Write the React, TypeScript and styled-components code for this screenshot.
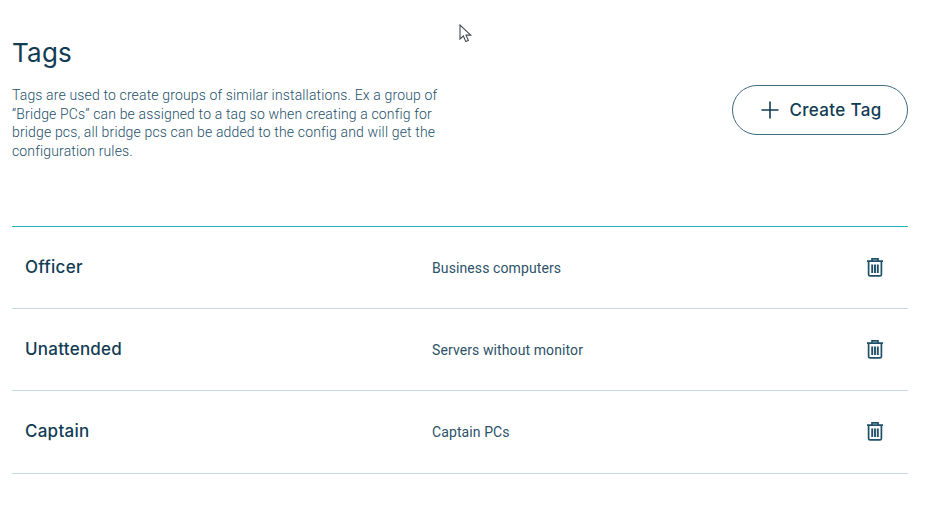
import React from 'react'

import styled, { createGlobalStyle } from 'styled-components'

const GlobalStyle = createGlobalStyle`
  html, body {
    margin: 0;
    padding: 0;
    background: #ffffff;
  }
`

const Page = styled.div`
  position: relative;
  width: 940px;
  height: 505px;
  box-sizing: border-box;
  padding: 36px 32px 0 12px;
  overflow: hidden;
  font-family: 'Roboto', 'Liberation Sans', sans-serif;
  color: #12394f;
`

const Header = styled.header`
  display: flex;
  justify-content: space-between;
  align-items: flex-start;
  height: 190px;
`

const Intro = styled.div`
  width: 445px;
`

const Title = styled.h1`
  margin: 0 0 16px;
  font-family: 'Inter', sans-serif;
  font-size: 26px;
  line-height: 34px;
  font-weight: 400;
  letter-spacing: 0.2px;
  color: #123c54;
`

const Description = styled.p`
  margin: 0;
  font-size: 14px;
  line-height: 18.6px;
  font-weight: 300;
  letter-spacing: 0.15px;
  color: #24506a;
`

const CreateButton = styled.button`
  display: flex;
  align-items: center;
  justify-content: center;
  gap: 9px;
  width: 176px;
  height: 50px;
  margin-top: 49px;
  padding: 0 0 0 2px;
  box-sizing: border-box;
  background: #ffffff;
  border: 1.5px solid #3f6a82;
  border-radius: 25px;
  font-family: 'Inter', sans-serif;
  font-size: 17px;
  font-weight: 500;
  letter-spacing: 0.35px;
  color: #123c54;
`

const List = styled.ul`
  margin: 0;
  padding: 0;
  list-style: none;
  border-top: 1px solid #2bb5b8;
`

const Row = styled.li`
  display: grid;
  grid-template-columns: 407px 1fr 42px;
  align-items: center;
  height: 81.2px;
  padding-left: 13px;
  border-bottom: 1px solid #c5d8df;
`

const Name = styled.span`
  margin-bottom: 2px;
  font-family: 'Inter', sans-serif;
  font-size: 17px;
  font-weight: 500;
  letter-spacing: 0.25px;
  color: #123c54;
`

const Detail = styled.span`
  font-size: 14px;
  color: #2c5268;
  letter-spacing: 0.1px;
`

const DeleteButton = styled.button`
  display: flex;
  margin-bottom: 2px;
  padding: 0;
  border: 0;
  background: none;
`

const Pointer = styled.svg`
  position: absolute;
  left: 459px;
  top: 24px;
`

const PlusIcon = () => (
  <svg width="20" height="20" viewBox="0 0 20 20" fill="none" stroke="#123c54" strokeWidth="1.6">
    <path d="M10 1.5v17M1.5 10h17" />
  </svg>
)

const TrashIcon = () => (
  <svg width="18" height="20" viewBox="0 0 18 20" fill="none" stroke="#1f5068" strokeWidth="1.7">
    <path d="M1 4.2h16M6 4V1.9h6V4" />
    <path d="M2.6 4.2v13.2c0 .9.6 1.5 1.5 1.5h9.8c.9 0 1.5-.6 1.5-1.5V4.2" />
    <path d="M6.2 7.5v8.4M9 7.5v8.4M11.8 7.5v8.4" strokeWidth="1.9" />
  </svg>
)

const tags = [
  { id: 1, name: 'Officer', detail: 'Business computers' },
  { id: 2, name: 'Unattended', detail: 'Servers without monitor' },
  { id: 3, name: 'Captain', detail: 'Captain PCs' }
]

const App = () => (
  <Page>
    <GlobalStyle />
    <Header>
      <Intro>
        <Title>Tags</Title>
        <Description>
          Tags are used to create groups of similar installations. Ex a group of
          “Bridge PCs” can be assigned to a tag so when creating a config for
          bridge pcs, all bridge pcs can be added to the config and will get the
          configuration rules.
        </Description>
      </Intro>
      <CreateButton>
        <PlusIcon />
        Create Tag
      </CreateButton>
    </Header>
    <List>
      {tags.map((tag) => (
        <Row key={tag.id}>
          <Name>{tag.name}</Name>
          <Detail>{tag.detail}</Detail>
          <DeleteButton aria-label="Delete tag">
            <TrashIcon />
          </DeleteButton>
        </Row>
      ))}
    </List>
    <Pointer width="14" height="20" viewBox="0 0 14 20" fill="#ffffff" stroke="#444c52" strokeWidth="1.1">
      <path d="M1 1v14l3.4-3 2.4 5.6 2.6-1.1-2.4-5.4h4.7z" />
    </Pointer>
  </Page>
)

export default App
